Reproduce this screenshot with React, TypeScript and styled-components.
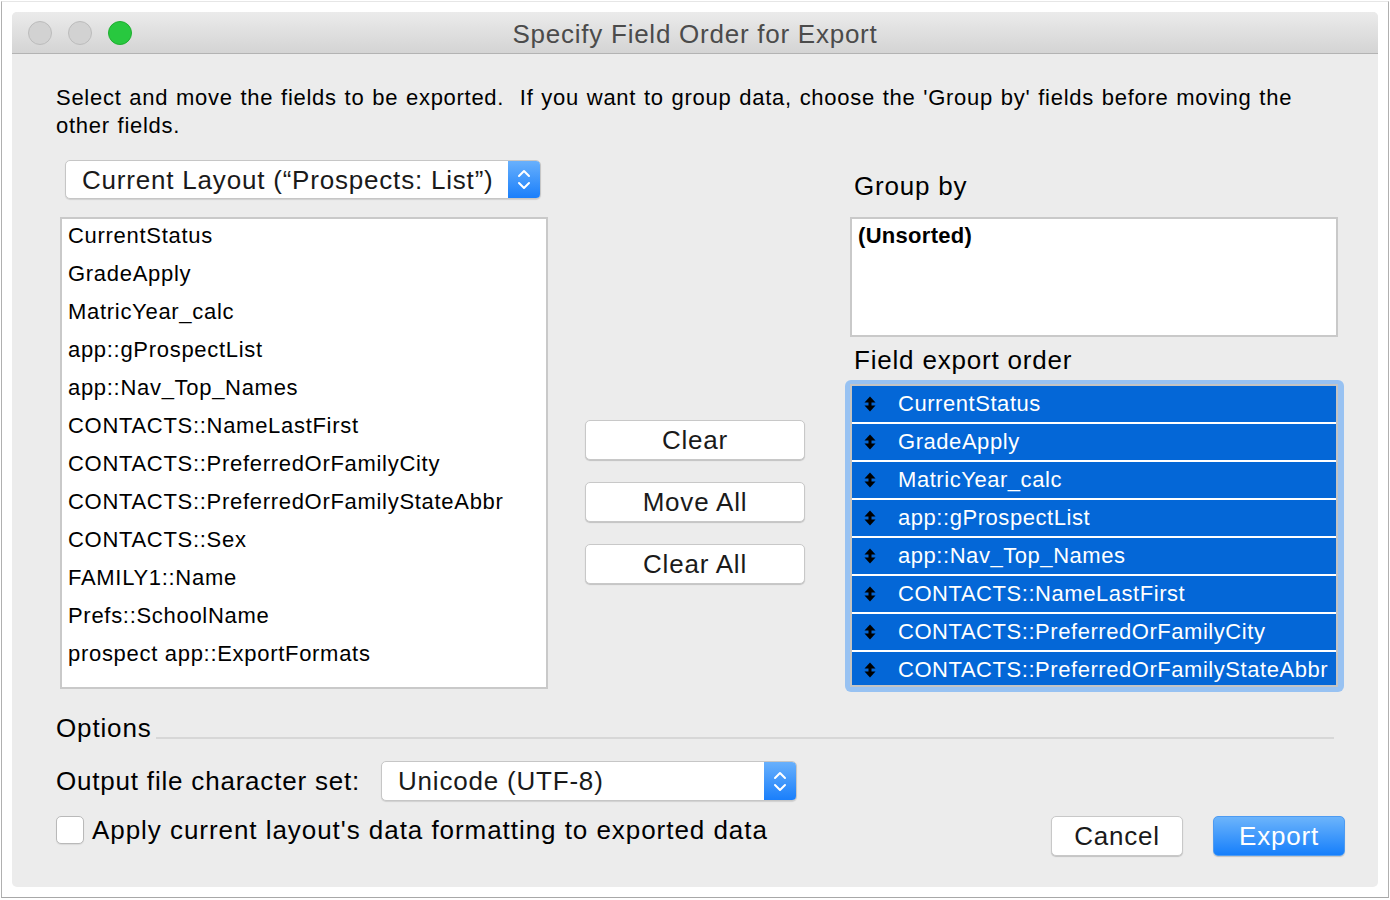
import React from 'react';
import styled, { createGlobalStyle } from 'styled-components';

const GlobalStyle = createGlobalStyle`
  html, body { margin: 0; padding: 0; background: #ffffff; }
  body { font-family: "Liberation Sans", Arial, Helvetica, sans-serif; color: #000; }
  * { box-sizing: border-box; }
`;

const Frame = styled.div`
  width: 1388px;
  height: 897px;
  margin: 1px 0 0 1px;
  border-left: 1px solid #b0b0b0;
  border-right: 1px solid #b0b0b0;
  border-bottom: 1px solid #a8a8a8;
  border-top: 1px solid #e6e6e6;
  padding: 10px;
`;

const Window = styled.div`
  width: 1366px;
  height: 875px;
  background: #ececec;
  border-radius: 5px;
  overflow: hidden;
  display: flex;
  flex-direction: column;
`;

const TitleBar = styled.div`
  height: 42px;
  flex: none;
  display: grid;
  grid-template-columns: 1fr auto 1fr;
  align-items: center;
  background: linear-gradient(#ebebeb, #d4d4d4);
  border-bottom: 1px solid #b3b3b3;
`;

const Lights = styled.div`
  display: flex;
  gap: 16px;
  padding-left: 16px;
`;

const Light = styled.span<{ $color: string; $border: string }>`
  width: 24px;
  height: 24px;
  border-radius: 50%;
  background: ${(p) => p.$color};
  border: 1px solid ${(p) => p.$border};
`;

const Title = styled.div`
  font-size: 26px;
  letter-spacing: 0.75px;
  color: #4b4b4b;
  line-height: 30px;
  padding-top: 2px;
`;

const Body = styled.div`
  flex: 1;
  display: flex;
  flex-direction: column;
  padding: 30px 34px 0 44px;
`;

const Instructions = styled.p`
  margin: 0;
  font-size: 22px;
  line-height: 28px;
  letter-spacing: 0.72px;
  word-spacing: 1px;
  white-space: nowrap;
`;

const Columns = styled.div`
  display: flex;
  align-items: flex-start;
  margin-top: 20px;
`;

const LeftCol = styled.div`
  width: 488px;
  margin-left: 4px;
  display: flex;
  flex-direction: column;
`;

const MidCol = styled.div`
  width: 220px;
  margin-left: 37px;
  margin-top: 260px;
  display: flex;
  flex-direction: column;
  gap: 22px;
`;

const RightCol = styled.div`
  width: 499px;
  margin-left: 40px;
  display: flex;
  flex-direction: column;
`;

const PopupBox = styled.div<{ $width: number }>`
  width: ${(p) => p.$width}px;
  height: ${(p) => (p.$width > 450 ? 39 : 40)}px;
  display: flex;
  background: #fff;
  border: 1px solid #c6c6c6;
  border-radius: 5px;
  box-shadow: 0 1px 1px rgba(0, 0, 0, 0.12);
  overflow: hidden;
`;

const PopupText = styled.div`
  flex: 1;
  padding-left: 16px;
  padding-top: 1px;
  font-size: 26px;
  letter-spacing: 0.8px;
  display: flex;
  align-items: center;
  color: #1a1a1a;
  white-space: nowrap;
`;

const Stepper = styled.div`
  width: 32px;
  flex: none;
  background: linear-gradient(#68b0fc, #1a7ffb);
  display: flex;
  align-items: center;
  justify-content: center;
`;

const ListBox = styled.div<{ $height: number }>`
  height: ${(p) => p.$height}px;
  background: #fff;
  border: 2px solid #c9c9c9;
  overflow: hidden;
`;

const ListItem = styled.div<{ $bold?: boolean }>`
  height: 38px;
  line-height: 33px;
  padding-left: 6px;
  font-size: 22px;
  letter-spacing: ${(p) => (p.$bold ? '0.3px' : '0.7px')};
  font-weight: ${(p) => (p.$bold ? 700 : 400)};
  white-space: nowrap;
`;

const PushButton = styled.button<{ $primary?: boolean; $width?: number }>`
  width: ${(p) => (p.$width ? `${p.$width}px` : '100%')};
  height: 40px;
  padding: 0;
  font-family: "Liberation Sans", Arial, sans-serif;
  font-size: 26px;
  letter-spacing: 0.8px;
  border-radius: 5px;
  color: ${(p) => (p.$primary ? '#ffffff' : '#1a1a1a')};
  background: ${(p) => (p.$primary ? 'linear-gradient(#6cb4fb, #167ffb)' : '#ffffff')};
  border: 1px solid ${(p) => (p.$primary ? '#4d9bf2' : '#c8c8c8')};
  box-shadow: 0 1px 1px rgba(0, 0, 0, 0.18);
`;

const SectionLabel = styled.div<{ $top: number; $bottom: number }>`
  font-size: 26px;
  letter-spacing: 0.8px;
  line-height: 30px;
  padding-left: 9px;
  margin-top: ${(p) => p.$top}px;
  margin-bottom: ${(p) => p.$bottom}px;
`;

const Inset = styled.div`
  margin: 0 6px 0 5px;
`;

const FocusRing = styled.div`
  height: 312px;
  padding: 4px 6px 5px 5px;
  background: #98c2f2;
  border-radius: 6px;
`;

const OrderList = styled.div`
  height: 303px;
  border: 2px solid #c4c4c4;
  background: #fff;
  overflow: hidden;
`;

const OrderRow = styled.div`
  height: 38px;
  background: #0467d7;
  border-bottom: 2px solid #ffffff;
  display: flex;
  align-items: center;
  color: #fff;
  font-size: 22px;
  letter-spacing: 0.55px;
  white-space: nowrap;
`;

const Grip = styled.svg`
  margin-left: 12px;
  margin-right: 22px;
  flex: none;
`;

const OptionsRow = styled.div`
  display: flex;
  align-items: flex-end;
  margin-top: 21px;
  margin-right: 10px;
  height: 30px;
`;

const OptionsLabel = styled.div`
  font-size: 26px;
  letter-spacing: 0.85px;
  line-height: 30px;
`;

const Rule = styled.div`
  flex: 1;
  height: 2px;
  background: #d7d7d7;
  margin-bottom: 4px;
  margin-left: 4px;
`;

const CharsetRow = styled.div`
  display: grid;
  grid-template-columns: 325px auto;
  align-items: center;
  margin-top: 18px;
`;

const FieldLabel = styled.div`
  font-size: 26px;
  letter-spacing: 0.8px;
  white-space: nowrap;
`;

const BottomRow = styled.div`
  display: flex;
  justify-content: space-between;
  align-items: flex-start;
  margin-top: 15px;
  margin-right: -1px;
`;

const CheckRow = styled.label`
  display: flex;
  align-items: center;
  gap: 8px;
  height: 28px;
  font-size: 26px;
  letter-spacing: 0.95px;
  white-space: nowrap;
`;

const CheckBox = styled.span`
  width: 28px;
  height: 28px;
  background: #fff;
  border: 1px solid #b9b9b9;
  border-radius: 5px;
  box-shadow: 0 1px 1px rgba(0, 0, 0, 0.08);
`;

const ButtonGroup = styled.div`
  display: flex;
  gap: 30px;
`;

const Chevrons = () => (
  <svg width="32" height="39" viewBox="0 0 32 39">
    <polyline points="11,16 16,11 21,16" fill="none" stroke="#fff" strokeWidth="2" strokeLinecap="round" strokeLinejoin="round" />
    <polyline points="11,23 16,28 21,23" fill="none" stroke="#fff" strokeWidth="2" strokeLinecap="round" strokeLinejoin="round" />
  </svg>
);

const Popup = ({ width, label }: { width: number; label: string }) => (
  <PopupBox $width={width}>
    <PopupText>{label}</PopupText>
    <Stepper>
      <Chevrons />
    </Stepper>
  </PopupBox>
);

const GripIcon = () => (
  <Grip width="12" height="16" viewBox="0 0 12 16">
    <polygon points="0.5,6.5 6,0.5 11.5,6.5" fill="#000" />
    <rect x="4.5" y="6" width="3" height="4" fill="#000" />
    <polygon points="0.5,9.5 6,15.5 11.5,9.5" fill="#000" />
  </Grip>
);

const availableFields = [
  'CurrentStatus',
  'GradeApply',
  'MatricYear_calc',
  'app::gProspectList',
  'app::Nav_Top_Names',
  'CONTACTS::NameLastFirst',
  'CONTACTS::PreferredOrFamilyCity',
  'CONTACTS::PreferredOrFamilyStateAbbr',
  'CONTACTS::Sex',
  'FAMILY1::Name',
  'Prefs::SchoolName',
  'prospect app::ExportFormats',
];

const exportFields = availableFields.slice(0, 8);

export default function App() {
  return (
    <>
      <GlobalStyle />
      <Frame>
        <Window>
          <TitleBar>
            <Lights>
              <Light $color="#d2d2d2" $border="#bcbcbc" />
              <Light $color="#d2d2d2" $border="#bcbcbc" />
              <Light $color="#28c83f" $border="#1fae30" />
            </Lights>
            <Title>Specify Field Order for Export</Title>
            <div />
          </TitleBar>
          <Body>
            <Instructions>
              Select and move the fields to be exported.&nbsp; If you want to group data, choose the 'Group by' fields before moving the
              <br />
              other fields.
            </Instructions>
            <Columns>
              <LeftCol>
                <Inset>
                  <Popup width={476} label="Current Layout (“Prospects: List”)" />
                </Inset>
                <ListBox $height={472} style={{ marginTop: 18 }}>
                  {availableFields.map((f) => (
                    <ListItem key={f}>{f}</ListItem>
                  ))}
                </ListBox>
              </LeftCol>
              <MidCol>
                <PushButton>Clear</PushButton>
                <PushButton>Move All</PushButton>
                <PushButton>Clear All</PushButton>
              </MidCol>
              <RightCol>
                <SectionLabel $top={11} $bottom={16}>Group by</SectionLabel>
                <Inset>
                  <ListBox $height={120}>
                    <ListItem $bold>(Unsorted)</ListItem>
                  </ListBox>
                </Inset>
                <SectionLabel $top={8} $bottom={5}>Field export order</SectionLabel>
                <FocusRing>
                  <OrderList>
                    {exportFields.map((f) => (
                      <OrderRow key={f}>
                        <GripIcon />
                        {f}
                      </OrderRow>
                    ))}
                  </OrderList>
                </FocusRing>
              </RightCol>
            </Columns>
            <OptionsRow>
              <OptionsLabel>Options</OptionsLabel>
              <Rule />
            </OptionsRow>
            <CharsetRow>
              <FieldLabel>Output file character set:</FieldLabel>
              <Popup width={416} label="Unicode (UTF-8)" />
            </CharsetRow>
            <BottomRow>
              <CheckRow>
                <CheckBox />
                Apply current layout's data formatting to exported data
              </CheckRow>
              <ButtonGroup>
                <PushButton $width={132}>Cancel</PushButton>
                <PushButton $width={132} $primary>Export</PushButton>
              </ButtonGroup>
            </BottomRow>
          </Body>
        </Window>
      </Frame>
    </>
  );
}
